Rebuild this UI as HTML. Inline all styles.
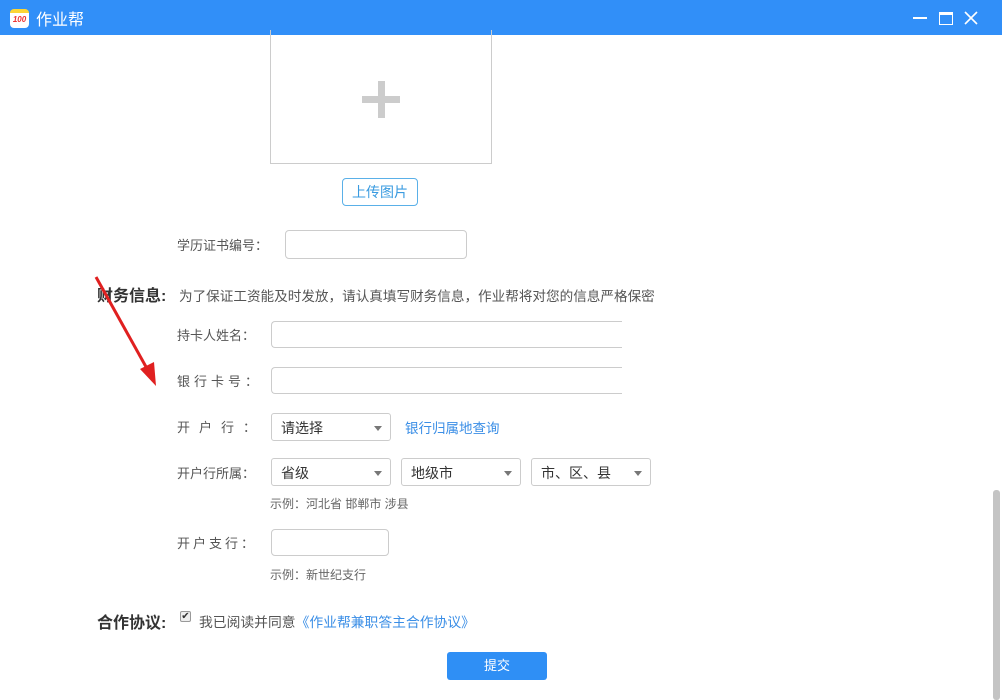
<!DOCTYPE html>
<html><head><meta charset="utf-8"><style>
*{margin:0;padding:0;box-sizing:border-box}
body{width:1002px;height:700px;overflow:hidden;background:#fff;position:relative;font-family:"Liberation Sans","Noto Sans CJK SC",sans-serif;font-size:13px;color:#555}
.a{position:absolute}
.in{position:absolute;border:1px solid #ccc;border-radius:4px;background:#fff}
.sel{position:absolute;border:1px solid #ccc;border-radius:3px;background:#fff;height:28px;font-size:14px;color:#333;padding-left:9px;line-height:28px}
.sel:after{content:"";position:absolute;right:8px;top:12px;border-left:4px solid transparent;border-right:4px solid transparent;border-top:5px solid #777}
.lab{position:absolute;font-size:13px;color:#555;white-space:nowrap}
.h{position:absolute;font-size:16px;font-weight:bold;color:#333}
.tip{position:absolute;font-size:12px;color:#666}
</style></head><body>
<div class="a" style="left:0;top:0;width:1002px;height:35px;background:#318ff8"></div>
<div class="a" style="left:10px;top:9px;width:19px;height:19px;border-radius:4px;background:#fff;border-top:4px solid #fcd535;font-size:8px;color:#e33;font-weight:bold;font-style:italic;text-align:center;line-height:13px">100</div>
<div class="a" style="left:36px;top:6px;color:#fff;font-size:16px">作业帮</div>
<div class="a" style="left:913px;top:17px;width:14px;height:2px;background:#fff"></div>
<div class="a" style="left:939px;top:12px;width:14px;height:13px;border:1.5px solid #fff;border-top-width:3px"></div>
<svg class="a" style="left:964px;top:11px" width="14" height="14"><path d="M1 1L13 13M13 1L1 13" stroke="#fff" stroke-width="1.6"/></svg>

<div class="a" style="left:270px;top:30px;width:222px;height:134px;border:1px solid #ccc;border-top:none"></div>
<div class="a" style="left:362px;top:96px;width:38px;height:7px;background:#ccc"></div>
<div class="a" style="left:378px;top:81px;width:7px;height:37px;background:#ccc"></div>
<div class="a" style="left:342px;top:178px;width:76px;height:28px;border:1px solid #5ab0e8;border-radius:4px;color:#3a9be0;font-size:14px;text-align:center;line-height:26px">上传图片</div>

<div class="lab" style="left:177px;top:235px">学历证书编号：</div>
<div class="in" style="left:285px;top:230px;width:182px;height:29px"></div>

<div class="h" style="left:97px;top:282px">财务信息:</div>
<div class="lab" style="left:179px;top:285px;font-size:13.6px">为了保证工资能及时发放，请认真填写财务信息，作业帮将对您的信息严格保密</div>

<div class="lab" style="left:177px;top:325px">持卡人姓名：</div>
<div class="in" style="left:271px;top:321px;width:360px;height:27px;border-right:none"></div>
<div class="lab" style="left:177px;top:371px;letter-spacing:4px">银行卡号：</div>
<div class="in" style="left:271px;top:367px;width:360px;height:27px;border-right:none"></div>
<div class="a" style="left:622px;top:315px;width:20px;height:85px;background:#fff"></div>

<div class="lab" style="left:177px;top:417px;letter-spacing:9px">开户行：</div>
<div class="sel" style="left:271px;top:413px;width:120px">请选择</div>
<div class="a" style="left:405px;top:417px;color:#3a8ee6;font-size:13.5px">银行归属地查询</div>

<div class="lab" style="left:177px;top:463px">开户行所属：</div>
<div class="sel" style="left:271px;top:458px;width:120px">省级</div>
<div class="sel" style="left:401px;top:458px;width:120px">地级市</div>
<div class="sel" style="left:531px;top:458px;width:120px">市、区、县</div>
<div class="tip" style="left:270px;top:495px">示例：河北省 邯郸市 涉县</div>

<div class="lab" style="left:177px;top:533px;letter-spacing:3px">开户支行：</div>
<div class="in" style="left:271px;top:529px;width:118px;height:27px"></div>
<div class="tip" style="left:270px;top:566px">示例：新世纪支行</div>

<div class="h" style="left:97px;top:609px">合作协议:</div>
<div class="a" style="left:180px;top:611px;width:11px;height:11px;border:1px solid #999;border-radius:2px;background:#eee;font-size:10px;line-height:9px;color:#333;text-align:center">✔</div>
<div class="lab" style="left:199px;top:611px;font-size:13.8px">我已阅读并同意<span style="color:#3a8ee6">《作业帮兼职答主合作协议》</span></div>

<div class="a" style="left:447px;top:652px;width:100px;height:28px;background:#2f8ff5;border-radius:3px;color:#fff;font-size:13px;text-align:center;line-height:28px">提交</div>

<div class="a" style="left:993px;top:490px;width:7px;height:210px;background:#c4c4c4;border-radius:3px"></div>

<svg class="a" style="left:92px;top:274px" width="70" height="115"><path d="M4 3L58 100" stroke="#e02020" stroke-width="3"/><path d="M48 95L64 112L62 88Z" fill="#e02020"/></svg>
</body></html>
